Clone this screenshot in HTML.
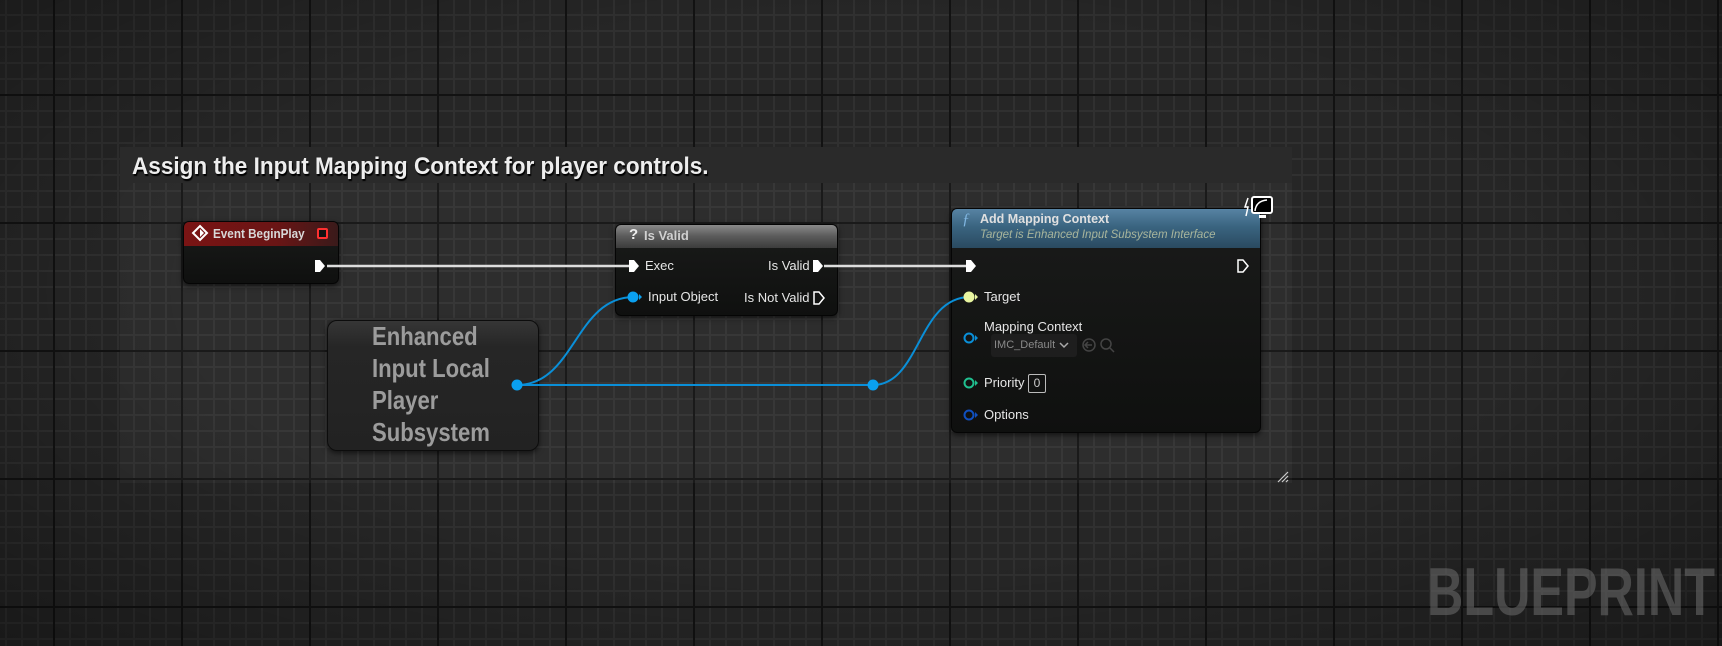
<!DOCTYPE html>
<html><head><meta charset="utf-8"><style>
*{margin:0;padding:0;box-sizing:border-box}
body{width:1722px;height:646px;overflow:hidden;position:relative;font-family:"Liberation Sans",sans-serif;
background:
linear-gradient(90deg,#121212 2px,transparent 2px) 53px 0/128px 100%,
linear-gradient(#121212 2px,transparent 2px) 0 94px/100% 128px,
linear-gradient(90deg,#303030 2px,transparent 2px) 5px 0/16px 100%,
linear-gradient(#303030 2px,transparent 2px) 0 14px/100% 16px,
#262626;}
.vig{position:absolute;inset:0;background:radial-gradient(ellipse at 50% 45%,rgba(0,0,0,0) 55%,rgba(0,0,0,.35) 100%)}
.abs{position:absolute}
.cm{left:120px;top:147px;width:1172px;height:336px;background:rgba(255,255,255,.035)}
.cmt{left:120px;top:147px;width:1172px;height:36px;background:#2a2a2a}
.cmtx{left:132px;top:153px;color:#eee;font:bold 24px "Liberation Sans",sans-serif;text-shadow:1px 2px 1px #000;transform:scaleX(.94);transform-origin:0 0;white-space:nowrap}
.node{position:absolute;border-radius:6px;background:linear-gradient(#1a1b1a,#0f100f);border:1px solid #050505;box-shadow:0 2px 6px rgba(0,0,0,.6);overflow:hidden}
.hd{position:absolute;left:0;right:0;top:0;color:#ddd;font-size:13px}
.t{position:absolute;color:#e6e6e6;font-size:13px;white-space:nowrap}
</style></head><body>
<div class="vig"></div>
<div class="abs cm"></div>
<div class="abs cmt"></div>
<div class="abs cmtx">Assign the Input Mapping Context for player controls.</div>

<div class="node" style="left:183px;top:221px;width:156px;height:63px">
 <div class="hd" style="height:24px;background:linear-gradient(90deg,#7a1414,#6a1515 60%,#3a1a1a)"></div>
</div>
<div class="t" style="left:213px;top:226px;font-weight:bold;color:#d8d8d8;transform:scaleX(.9);transform-origin:0 0">Event BeginPlay</div>

<div class="node" style="left:615px;top:224px;width:223px;height:92px">
 <div class="hd" style="height:23px;background:linear-gradient(180deg,#8a8a8a,#5a5a5a 50%,#3c3c3c)"></div>
</div>
<div class="t" style="left:629px;top:226px;font-weight:bold;font-size:15px;color:#eee">?</div>
<div class="t" style="left:644px;top:228px;font-weight:bold;color:#d0d0d0">Is Valid</div>
<div class="t" style="left:645px;top:258px">Exec</div>
<div class="t" style="left:768px;top:258px">Is Valid</div>
<div class="t" style="left:648px;top:289px">Input Object</div>
<div class="t" style="left:744px;top:290px">Is Not Valid</div>

<div class="abs" style="left:327px;top:320px;width:212px;height:131px;border-radius:10px;background:linear-gradient(#363636,#262626 20%,#222);border:1px solid #0c0c0c;box-shadow:0 2px 6px rgba(0,0,0,.6)"></div>
<div class="abs" style="left:372px;top:320px;color:#9c9c9c;font:bold 26px/32px 'Liberation Sans',sans-serif;transform:scaleX(.85);transform-origin:0 0;white-space:nowrap">Enhanced<br>Input Local<br>Player<br>Subsystem</div>

<div class="node" style="left:951px;top:208px;width:310px;height:225px">
 <div class="hd" style="height:39px;background:linear-gradient(180deg,#5783a3,#3a6480 45%,#2a4a60)"></div>
</div>
<div class="t" style="left:962px;top:211px;color:#7fb5e0;font:italic 16px 'Liberation Serif',serif">ƒ</div>
<div class="t" style="left:980px;top:212px;font-weight:bold;font-size:12.5px;color:#e0e0e0">Add Mapping Context</div>
<div class="t" style="left:980px;top:229px;font-style:italic;font-size:11.5px;color:#a8b59c">Target is Enhanced Input Subsystem Interface</div>
<div class="t" style="left:984px;top:289px">Target</div>
<div class="t" style="left:984px;top:319px">Mapping Context</div>
<div class="abs" style="left:991px;top:334px;width:86px;height:23px;background:#1e1e1e;border-radius:3px"></div>
<div class="t" style="left:994px;top:339px;font-size:11px;color:#8a8a8a">IMC_Default</div>
<div class="t" style="left:984px;top:375px">Priority</div>
<div class="abs" style="left:1028px;top:374px;width:18px;height:19px;border:1px solid #bbb;border-radius:2px;color:#ccc;font-size:12px;text-align:center;line-height:17px">0</div>
<div class="t" style="left:984px;top:407px">Options</div>

<div class="abs" style="left:1427px;top:558px;color:rgba(110,110,110,.55);font:bold 68px 'Liberation Sans',sans-serif;transform:scaleX(.74);transform-origin:0 0;white-space:nowrap;line-height:68px">BLUEPRINT</div>

<svg class="abs" style="left:0;top:0" width="1722" height="646">
 <line x1="327" y1="266" x2="629" y2="266" stroke="#ddd" stroke-width="2.5"/>
 <line x1="824" y1="266" x2="966" y2="266" stroke="#ddd" stroke-width="2.5"/>
 <path d="M517 385 C575 385 575 297 634 297" fill="none" stroke="#0a8fd8" stroke-width="2"/>
 <line x1="517" y1="385" x2="873" y2="385" stroke="#0a8fd8" stroke-width="2"/>
 <path d="M873 385 C920 385 918 297 970 297" fill="none" stroke="#0a8fd8" stroke-width="2"/>
 <circle cx="517" cy="385" r="5.5" fill="#0aa0f0"/>
 <circle cx="873" cy="385" r="5.5" fill="#0aa0f0"/>
 <path d="M200 226 l7 7 l-7 7 l-7 -7z" fill="none" stroke="#fff" stroke-width="2"/>
 <path d="M200 229 l4 4 l-4 4z" fill="#fff"/>
 <rect x="318" y="229" width="9" height="9" fill="#111" stroke="#ff3030" stroke-width="2" rx="1"/>
 <g fill="#fff">
  <path d="M315 260 h5 l5 6 l-5 6 h-5z"/>
  <path d="M629 260 h5 l5 6 l-5 6 h-5z"/>
  <path d="M813 260 h5 l5 6 l-5 6 h-5z"/>
  <path d="M966 260 h5 l5 6 l-5 6 h-5z"/>
 </g>
 <g fill="none" stroke="#fff" stroke-width="1.5">
  <path d="M814 292 h5 l5 6 l-5 6 h-5z"/>
  <path d="M1238 260 h5 l5 6 l-5 6 h-5z"/>
 </g>
 <circle cx="633" cy="297" r="5.5" fill="#0aa0f0"/><path d="M639 294 l3 3 l-3 3z" fill="#0aa0f0"/>
 <circle cx="969" cy="297" r="5.5" fill="#e8f5a0"/><path d="M975 294 l3 3 l-3 3z" fill="#e8f5a0"/>
 <circle cx="969" cy="338" r="4.5" fill="none" stroke="#0a8fd8" stroke-width="2"/><path d="M975 335 l3 3 l-3 3z" fill="#0a8fd8"/>
 <circle cx="969" cy="383" r="4.5" fill="none" stroke="#20c090" stroke-width="2"/><path d="M975 380 l3 3 l-3 3z" fill="#20c090"/>
 <circle cx="969" cy="415" r="4.5" fill="none" stroke="#1050c0" stroke-width="2"/><path d="M975 412 l3 3 l-3 3z" fill="#1050c0"/>
 <path d="M1060 343 l4 4 l4 -4" fill="none" stroke="#aaa" stroke-width="1.5"/>
 <circle cx="1089" cy="345" r="6" fill="none" stroke="#444" stroke-width="1.5"/>
 <path d="M1092 345 h-6 m2 -3 l-3 3 l3 3" fill="none" stroke="#444" stroke-width="1.5"/>
 <circle cx="1106" cy="344" r="5" fill="none" stroke="#444" stroke-width="1.5"/>
 <line x1="1110" y1="348" x2="1114" y2="352" stroke="#444" stroke-width="1.5"/>
 <path d="M1248 198 l-3 9 h3 l-2 9" fill="none" stroke="#fff" stroke-width="1.5"/>
 <rect x="1252" y="197" width="20" height="16" rx="2" fill="#000" stroke="#fff" stroke-width="2"/>
 <path d="M1255 211 q1 -10 12 -11" fill="none" stroke="#fff" stroke-width="1.5"/>
 <rect x="1259" y="215" width="7" height="3" fill="#fff"/>
 <g stroke="#ccc" stroke-width="1.2">
  <line x1="1278" y1="482" x2="1288" y2="472"/>
  <line x1="1282" y1="482" x2="1288" y2="476"/>
  <line x1="1286" y1="482" x2="1288" y2="480"/>
 </g>
</svg>
</body></html>
